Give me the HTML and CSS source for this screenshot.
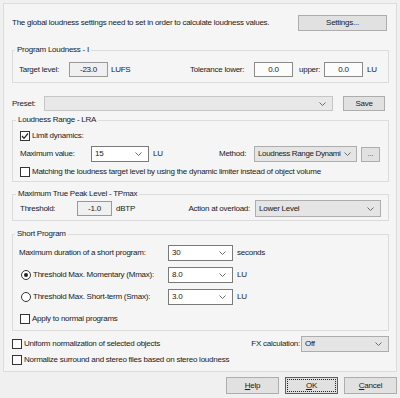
FILE: index.html
```html
<!DOCTYPE html>
<html>
<head>
<meta charset="utf-8">
<link rel="stylesheet" href="styles.css">
</head>
<body>
<div class="dialog">
  <div class="panel">
    <div class="top-row">
      <span>The global loudness settings need to set in order to calculate loudness values.</span>
      <button class="btn btn-settings">Settings...</button>
    </div>

    <fieldset class="group g-pl">
      <legend>Program Loudness - I</legend>
      <div class="row h15">
        <span class="w50">Target level:</span>
        <span class="field readonly w39">-23.0</span>
        <span class="unit-lufs">LUFS</span>
        <span class="w64">Tolerance lower:</span>
        <span class="field w39">0.0</span>
        <span class="upper-label">upper:</span>
        <span class="field w39">0.0</span>
        <span class="unit">LU</span>
      </div>
    </fieldset>

    <div class="row h15 preset-row">
      <span class="w32">Preset:</span>
      <div class="combo combo-list combo-disabled w289"><span></span><svg class="chev" width="7" height="4" viewBox="0 0 7 4"><polyline points="0.5,0.5 3.5,3.5 6.5,0.5"/></svg></div>
      <button class="btn btn-save">Save</button>
    </div>

    <fieldset class="group g-lra">
      <legend>Loudness Range - LRA</legend>
      <div class="row h11">
        <span class="check checked"><svg width="8" height="8" viewBox="0 0 8 8"><polyline points="1,4 3,6.3 7,1.5"/></svg></span>
        <span class="check-label">Limit dynamics:</span>
      </div>
      <div class="row h16 mt5">
        <span class="w71">Maximum value:</span>
        <div class="combo combo-edit w58"><span>15</span><svg class="chev" width="7" height="4" viewBox="0 0 7 4"><polyline points="0.5,0.5 3.5,3.5 6.5,0.5"/></svg></div>
        <span class="unit-lu-lra">LU</span>
        <span class="w35">Method:</span>
        <div class="combo combo-list combo-tight w103"><span class="combo-text">Loudness Range Dynami</span><svg class="chev" width="7" height="4" viewBox="0 0 7 4"><polyline points="0.5,0.5 3.5,3.5 6.5,0.5"/></svg></div>
        <button class="btn btn-dots">...</button>
      </div>
      <div class="row h11 mt4">
        <span class="check"></span>
        <span class="check-label">Matching the loudness target level by using the dynamic limiter instead of object volume</span>
      </div>
    </fieldset>

    <fieldset class="group g-tp">
      <legend>Maximum True Peak Level - TPmax</legend>
      <div class="row h17">
        <span class="w57">Threshold:</span>
        <span class="field readonly w35">-1.0</span>
        <span class="unit">dBTP</span>
        <span class="action-label">Action at overload:</span>
        <div class="combo combo-list w126 h17"><span>Lower Level</span><svg class="chev" width="7" height="4" viewBox="0 0 7 4"><polyline points="0.5,0.5 3.5,3.5 6.5,0.5"/></svg></div>
      </div>
    </fieldset>

    <fieldset class="group g-sp">
      <legend>Short Program</legend>
      <div class="row h16">
        <span class="w149">Maximum duration of a short program:</span>
        <div class="combo combo-edit w65"><span>30</span><svg class="chev" width="7" height="4" viewBox="0 0 7 4"><polyline points="0.5,0.5 3.5,3.5 6.5,0.5"/></svg></div>
        <span class="unit">seconds</span>
      </div>
      <div class="row h16 mt6">
        <span class="w149 radio-cell"><span class="radio checked"></span><span class="check-label">Threshold Max. Momentary (Mmax):</span></span>
        <div class="combo combo-edit w65"><span>8.0</span><svg class="chev" width="7" height="4" viewBox="0 0 7 4"><polyline points="0.5,0.5 3.5,3.5 6.5,0.5"/></svg></div>
        <span class="unit">LU</span>
      </div>
      <div class="row h16 mt6">
        <span class="w149 radio-cell"><span class="radio"></span><span class="check-label">Threshold Max. Short-term (Smax):</span></span>
        <div class="combo combo-edit w65"><span>3.0</span><svg class="chev" width="7" height="4" viewBox="0 0 7 4"><polyline points="0.5,0.5 3.5,3.5 6.5,0.5"/></svg></div>
        <span class="unit">LU</span>
      </div>
      <div class="row h11 mt8 apply-row">
        <span class="check"></span>
        <span class="check-label">Apply to normal programs</span>
      </div>
    </fieldset>

    <div class="row h16 fx-row">
      <span class="check"></span>
      <span class="check-label">Uniform normalization of selected objects</span>
      <span class="fx-label">FX calculation:</span>
      <div class="combo combo-list w88"><span>Off</span><svg class="chev" width="7" height="4" viewBox="0 0 7 4"><polyline points="0.5,0.5 3.5,3.5 6.5,0.5"/></svg></div>
    </div>
    <div class="row h11 mt2">
      <span class="check"></span>
      <span class="check-label">Normalize surround and stereo files based on stereo loudness</span>
    </div>
  </div>

  <div class="buttons">
    <button class="btn btn-main"><u>H</u>elp</button>
    <button class="btn btn-main btn-default"><span class="focus"><u>O</u>K</span></button>
    <button class="btn btn-main"><u>C</u>ancel</button>
  </div>
</div>
</body>
</html>
```

FILE: styles.css
```css
* { box-sizing: border-box; }

html, body {
  margin: 0;
  width: 400px;
  height: 398px;
  overflow: hidden;
  background: #f0f0f0;
}

body {
  font-family: "Liberation Sans", Arial, sans-serif;
  font-size: 8px;
  letter-spacing: -0.25px;
  line-height: 10px;
  color: #1a1a1a;
}

.dialog {
  padding: 3px 3px 0 3px;
}

.panel {
  height: 369px;
  border: 1px solid #dcdcdc;
  background: #f5f5f5;
  padding: 11px 7px 0 8px;
}

.top-row {
  display: flex;
  align-items: center;
  justify-content: space-between;
  height: 16px;
  white-space: nowrap;
}

.row {
  display: flex;
  align-items: center;
  white-space: nowrap;
}

.h11 { height: 11px; }
.h15 { height: 15px; }
.h16 { height: 16px; }
.h17 { height: 17px; }
.mt2 { margin-top: 2px; }
.mt4 { margin-top: 4px; }
.mt5 { margin-top: 5px; }
.mt6 { margin-top: 6px; }
.mt8 { margin-top: 8px; }

.w32 { width: 32px; flex: none; }
.w35 { width: 35px; flex: none; }
.w39 { width: 39px; flex: none; }
.w50 { width: 50px; flex: none; }
.w57 { width: 57px; flex: none; }
.w58 { width: 58px; flex: none; }
.w64 { width: 64px; flex: none; }
.w65 { width: 65px; flex: none; }
.w71 { width: 71px; flex: none; }
.w88 { width: 88px; flex: none; }
.w103 { width: 103px; flex: none; }
.w126 { width: 126px; flex: none; }
.w149 { width: 149px; flex: none; }
.w289 { width: 289px; flex: none; }

/* group boxes */
.group {
  margin: 0;
  border: 1px solid #dcdcdc;
  min-width: 0;
}

.group legend {
  padding: 0 2px;
  margin-left: -4px;
  line-height: 10px;
  height: 10px;
}

.g-pl { margin-top: 14px; padding: 7px 7px 5px 6px; }
.g-lra { margin-top: 4px; padding: 5px 7px 4px 7px; }
.g-tp { margin-top: 7px; padding: 1px 7px 3px 7px; }
.g-sp { margin-top: 8px; padding: 6px 7px 6px 6px; }

.preset-row { margin-top: 13px; }
.fx-row { margin-top: 5px; }

/* text fields */
.field {
  height: 15px;
  border: 1px solid #8a8a8a;
  background: #fcfcfc;
  text-align: center;
  line-height: 13px;
}

.field.readonly {
  background: #f0f0f0;
  border-color: #999;
}

.unit { margin-left: 4px; }
.unit-lufs { margin-left: 3px; width: 79px; flex: none; }
.upper-label { margin-left: 6px; width: 25px; flex: none; }
.unit-lu-lra { margin-left: 4px; width: 66px; flex: none; }

.action-label {
  flex: 1;
  text-align: right;
  padding-right: 5px;
}

.fx-label {
  flex: 1;
  text-align: right;
  padding-right: 1px;
}

/* combos */
.combo {
  display: flex;
  align-items: center;
  justify-content: space-between;
  height: 16px;
  padding: 0 6px 0 3px;
  overflow: hidden;
}

.combo-tight {
  padding: 0 5px 0 3px;
  letter-spacing: -0.35px;
}

.combo-text {
  min-width: 0;
}

.combo-edit {
  background: #fff;
  border: 1px solid #7a7a7a;
}

.combo-list {
  background: #e5e5e5;
  border: 1px solid #adadad;
}

.combo-disabled {
  background: #e8e8e8;
  border-color: #c6c6c6;
  height: 15px;
}

.combo.h17 { height: 17px; }

.chev {
  flex: none;
  fill: none;
  stroke: #6d6d6d;
  stroke-width: 1;
  margin-left: 2px;
}

/* buttons */
.btn {
  font: inherit;
  letter-spacing: inherit;
  color: #1a1a1a;
  background: #e1e1e1;
  border: 1px solid #adadad;
  padding: 0;
  margin: 0;
  flex: none;
}

.btn-settings { width: 89px; height: 16px; margin-right: 2px; }
.btn-save { width: 42px; height: 15px; margin-left: 10px; }
.btn-dots { width: 19px; height: 15px; margin-left: 4px; color: #555; }

.buttons {
  display: flex;
  justify-content: flex-end;
  gap: 6px;
  margin-top: 5px;
}

.btn-main { width: 53px; height: 17px; }

.btn-default {
  border-color: #0078d7;
  padding: 1px;
}

.btn-default .focus {
  display: block;
  height: 100%;
  border: 1px dotted #222;
  line-height: 11px;
}

/* checkboxes and radios */
.check {
  width: 10px;
  height: 10px;
  flex: none;
  border: 1px solid #333;
  background: #fff;
  display: flex;
  align-items: center;
  justify-content: center;
}

.check svg {
  fill: none;
  stroke: #222;
  stroke-width: 1.2;
}

.check-label { margin-left: 2px; }

.apply-row { padding-left: 1px; }

.radio-cell {
  display: flex;
  align-items: center;
}

.radio {
  width: 10px;
  height: 10px;
  flex: none;
  margin-left: 2px;
  border: 1px solid #333;
  border-radius: 50%;
  background: #fff;
  display: flex;
  align-items: center;
  justify-content: center;
}

.radio.checked::after {
  content: "";
  width: 4px;
  height: 4px;
  border-radius: 50%;
  background: #222;
}
```
